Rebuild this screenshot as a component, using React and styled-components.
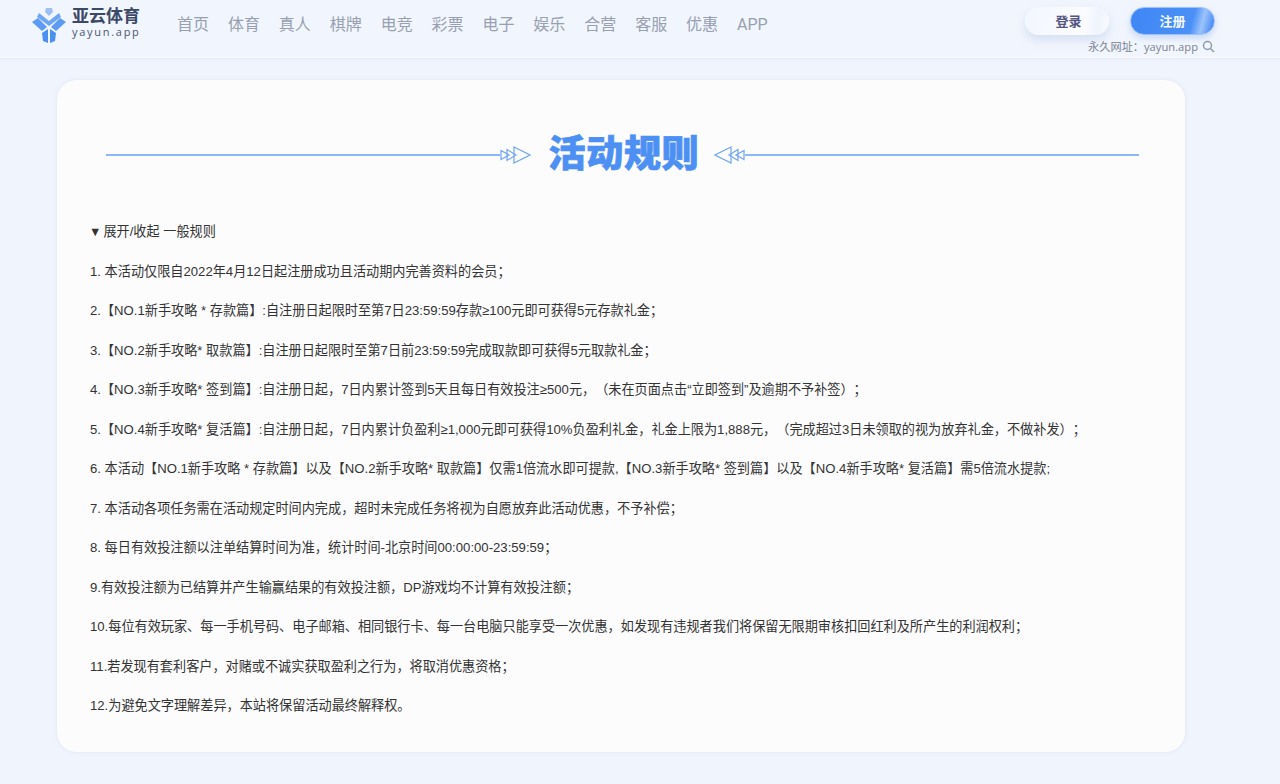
import styled, { createGlobalStyle } from 'styled-components';

const navItems = ['首页', '体育', '真人', '棋牌', '电竞', '彩票', '电子', '娱乐', '合营', '客服', '优惠', 'APP'];

const rules = [
  '1. 本活动仅限自2022年4月12日起注册成功且活动期内完善资料的会员；',
  '2.【NO.1新手攻略 * 存款篇】:自注册日起限时至第7日23:59:59存款≥100元即可获得5元存款礼金；',
  '3.【NO.2新手攻略* 取款篇】:自注册日起限时至第7日前23:59:59完成取款即可获得5元取款礼金；',
  '4.【NO.3新手攻略* 签到篇】:自注册日起，7日内累计签到5天且每日有效投注≥500元，（未在页面点击“立即签到”及逾期不予补签）；',
  '5.【NO.4新手攻略* 复活篇】:自注册日起，7日内累计负盈利≥1,000元即可获得10%负盈利礼金，礼金上限为1,888元，（完成超过3日未领取的视为放弃礼金，不做补发）；',
  '6. 本活动【NO.1新手攻略 * 存款篇】以及【NO.2新手攻略* 取款篇】仅需1倍流水即可提款,【NO.3新手攻略* 签到篇】以及【NO.4新手攻略* 复活篇】需5倍流水提款;',
  '7. 本活动各项任务需在活动规定时间内完成，超时未完成任务将视为自愿放弃此活动优惠，不予补偿；',
  '8. 每日有效投注额以注单结算时间为准，统计时间-北京时间00:00:00-23:59:59；',
  '9.有效投注额为已结算并产生输赢结果的有效投注额，DP游戏均不计算有效投注额；',
  '10.每位有效玩家、每一手机号码、电子邮箱、相同银行卡、每一台电脑只能享受一次优惠，如发现有违规者我们将保留无限期审核扣回红利及所产生的利润权利；',
  '11.若发现有套利客户，对赌或不诚实获取盈利之行为，将取消优惠资格；',
  '12.为避免文字理解差异，本站将保留活动最终解释权。',
];

const GlobalStyle = createGlobalStyle`
  html, body {
    margin: 0;
    padding: 0;
    background: #f0f4fd;
    font-family: "Liberation Sans", "Noto Sans CJK SC", sans-serif;
    text-spacing-trim: space-all;
  }
  * {
    box-sizing: border-box;
  }
`;

const Page = styled.div`
  width: 1280px;
  height: 784px;
  overflow: hidden;
  background: #f0f4fd;
`;

const Header = styled.header`
  display: flex;
  align-items: flex-start;
  height: 58px;
  padding-left: 32px;
  background: #f1f5fd;
  border-bottom: 1px solid #f9fbff;
  box-shadow: 0 1px 3px rgba(190, 200, 225, 0.25);
`;

const Logo = styled.div`
  display: flex;
  align-items: flex-start;
  gap: 6px;
  width: 145px;
  padding-top: 7px;
`;

const LogoText = styled.div`
  display: flex;
  flex-direction: column;
  align-items: flex-start;
  gap: 1px;
  padding-top: 2px;
`;

const LogoName = styled.div`
  font-size: 17px;
  font-weight: 700;
  line-height: 16px;
  color: #3b4868;
`;

const LogoDomain = styled.div`
  font-family: "Open Sans", sans-serif;
  font-size: 11px;
  font-weight: 500;
  line-height: 12px;
  letter-spacing: 1.72px;
  color: #4a5672;
`;

const Nav = styled.nav`
  display: flex;
  gap: 18.9px;
  padding-top: 14px;
`;

const NavItem = styled.a`
  font-family: Roboto, "Noto Sans CJK SC", sans-serif;
  font-size: 16px;
  line-height: 22px;
  color: #979fb1;
  cursor: pointer;
`;

const Account = styled.div`
  display: flex;
  flex-direction: column;
  align-items: flex-end;
  margin-left: auto;
  width: 230px;
  padding: 7px 65px 0 0;
`;

const Buttons = styled.div`
  display: flex;
  gap: 21px;
`;

const LoginButton = styled.button`
  width: 84px;
  height: 28px;
  border: 0;
  border-radius: 14px;
  padding: 0 0 2px 3px;
  font: 700 13px "Noto Sans CJK SC", sans-serif;
  color: #55567f;
  background: linear-gradient(100deg, #f2f6fe 0%, #fbfcff 70%, #eef3fd 85%, #fbfcff 100%);
  box-shadow: 0 5px 10px rgba(190, 205, 235, 0.55);
`;

const SignupButton = styled.button`
  width: 85px;
  height: 28px;
  border: 1px solid #9cc2fb;
  border-radius: 14px;
  padding: 0 0 2px;
  font: 700 13px "Noto Sans CJK SC", sans-serif;
  color: #f4f8ff;
  background: linear-gradient(105deg, #3f87f5 0%, #4a90f7 72%, #9cc3fa 84%, #4a8ef6 96%);
  box-shadow: 0 3px 6px rgba(170, 195, 240, 0.6);
`;

const Permalink = styled.div`
  display: flex;
  align-items: center;
  gap: 4px;
  margin-top: 4px;
  font-family: "Open Sans", "Noto Sans CJK SC", sans-serif;
  font-size: 11.2px;
  line-height: 15px;
  white-space: nowrap;
  color: #7c8392;
`;

const Card = styled.main`
  width: 1128px;
  height: 672px;
  margin: 22px 0 0 57px;
  padding: 48px 33px 0;
  background: #fcfcfd;
  border-radius: 20px;
  box-shadow: 0 0 4px rgba(200, 208, 228, 0.4);
`;

const TitleRow = styled.div`
  display: flex;
  align-items: center;
  padding: 0 13px 0 16px;
  height: 54px;
`;

const Line = styled.div`
  flex: 1;
  height: 1.5px;
  background: #8ab8f8;
`;

const Title = styled.h1`
  margin: 0 15px 0 18px;
  font-size: 37px;
  font-weight: 900;
  line-height: 54px;
  letter-spacing: 0.7px;
  white-space: nowrap;
  color: #4c90f4;
  -webkit-text-stroke: 0.7px #4c90f4;
`;

const Rules = styled.div`
  margin-top: 41px;
`;

const Rule = styled.p`
  margin: 0;
  height: 39.5px;
  font-size: 13.15px;
  line-height: 18px;
  white-space: nowrap;
  color: #333;
`;

const Marker = styled.span`
  font-size: 12.5px;
  margin: 0 2px 0 -1px;
`;

function LogoMark() {
  return (
    <svg width="34" height="36" viewBox="0 0 34 36">
      <path d="M14 1 L20 1 L21 5 L17 9 L13 5 Z" fill="#9dbff3" />
      <path d="M7 6 L17 14 L27 6 L29 10 L17 19 L5 10 Z" fill="#6ea6f5" />
      <path d="M0 15 L6 11 L15 20 L10 24 Z" fill="#5c9bf4" />
      <path d="M34 15 L28 11 L19 20 L24 24 Z" fill="#5c9bf4" />
      <path d="M10 26 L16 22 L16 36 L11 34 Z" fill="#4c90f2" />
      <path d="M24 26 L18 22 L18 36 L23 34 Z" fill="#4c90f2" />
    </svg>
  );
}

function SearchIcon() {
  return (
    <svg width="13" height="13" viewBox="0 0 13 13" fill="none" stroke="#8e9aad" strokeWidth="1.5">
      <circle cx="5.5" cy="5.5" r="4" />
      <path d="M8.5 8.5 L12 12" />
    </svg>
  );
}

const ArrowIcon = styled.svg`
  transform: ${(props) => (props.$flip ? 'scaleX(-1)' : 'none')};
`;

function Arrows({ flip }) {
  return (
    <ArrowIcon $flip={flip} width="31" height="18" viewBox="0 0 31 18" fill="none" stroke="#6fa6f2" strokeWidth="1.2">
      <path d="M1 4.5 L9 9 L1 13.5 Z" />
      <path d="M7 3.5 L16 9 L7 14.5 Z" />
      <path d="M14 1 L30 9 L14 17 Z" />
    </ArrowIcon>
  );
}

export default function App() {
  return (
    <Page>
      <GlobalStyle />
      <Header>
        <Logo>
          <LogoMark />
          <LogoText>
            <LogoName>亚云体育</LogoName>
            <LogoDomain>yayun.app</LogoDomain>
          </LogoText>
        </Logo>
        <Nav>
          {navItems.map((item) => (
            <NavItem key={item}>{item}</NavItem>
          ))}
        </Nav>
        <Account>
          <Buttons>
            <LoginButton>登录</LoginButton>
            <SignupButton>注册</SignupButton>
          </Buttons>
          <Permalink>
            永久网址：yayun.app
            <SearchIcon />
          </Permalink>
        </Account>
      </Header>
      <Card>
        <TitleRow>
          <Line />
          <Arrows />
          <Title>活动规则</Title>
          <Arrows flip />
          <Line />
        </TitleRow>
        <Rules>
          <Rule>
            <Marker>▼</Marker>展开/收起 一般规则
          </Rule>
          {rules.map((rule) => (
            <Rule key={rule}>{rule}</Rule>
          ))}
        </Rules>
      </Card>
    </Page>
  );
}
